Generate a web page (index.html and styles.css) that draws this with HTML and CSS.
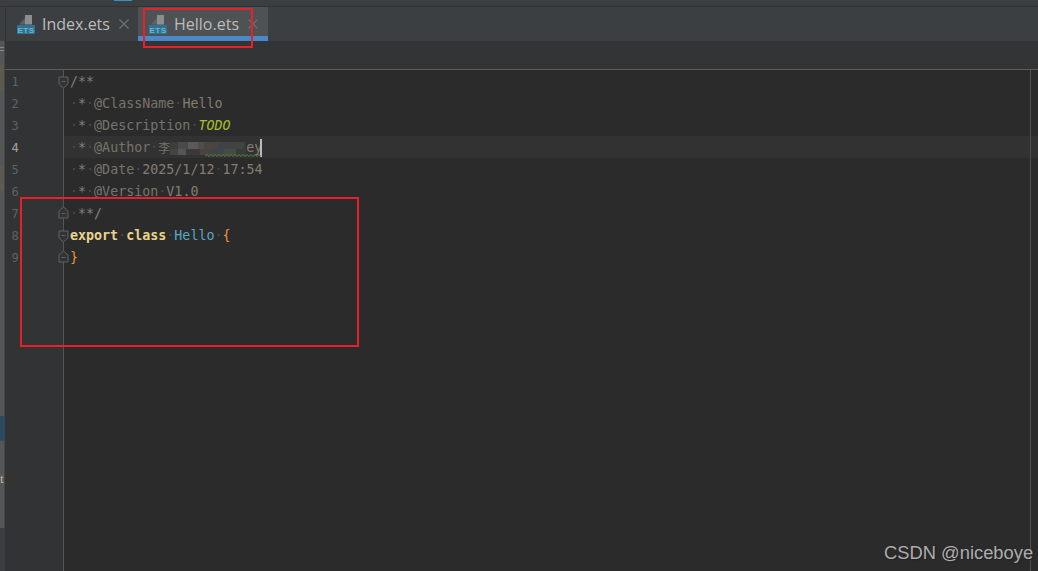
FILE: index.html
```html
<!DOCTYPE html>
<html lang="en">
<head>
<meta charset="utf-8">
<title>Hello.ets</title>
<link rel="stylesheet" href="styles.css">
</head>
<body>
<div class="app">
  <div class="topstrip"><span class="topmark"></span></div>
  <div class="tabbar">
    <div class="tab">
      <svg class="ets" viewBox="0 0 18 20" width="18" height="20"><rect class="ets-doc" x="8" y="0" width="7" height="9.500"/><path class="ets-fold" d="M2 9.500L8 3V9.500Z"/><rect class="ets-label" x="0" y="10" width="18" height="9"/><text class="ets-text" x="9" y="17.600" text-anchor="middle">ETS</text></svg>
      <span class="tab-name">Index.ets</span>
      <svg class="close" viewBox="0 0 10 10" width="10" height="10"><path d="M0.500 0.500L9.500 9.500M9.500 0.500L0.500 9.500"/></svg>
    </div>
    <div class="tab tab-active">
      <svg class="ets" viewBox="0 0 18 20" width="18" height="20"><rect class="ets-doc" x="8" y="0" width="7" height="9.500"/><path class="ets-fold" d="M2 9.500L8 3V9.500Z"/><rect class="ets-label" x="0" y="10" width="18" height="9"/><text class="ets-text" x="9" y="17.600" text-anchor="middle">ETS</text></svg>
      <span class="tab-name">Hello.ets</span>
      <svg class="close" viewBox="0 0 10 10" width="10" height="10"><path d="M0.500 0.500L9.500 9.500M9.500 0.500L0.500 9.500"/></svg>
    </div>
  </div>
  <div class="workspace">
    <div class="rail">
      <div class="rail-marks"></div>
      <div class="rail-tan"></div>
      <div class="rail-gap"></div>
      <div class="rail-tan"></div>
      <div class="rail-gap2"></div>
      <div class="rail-blue"></div>
      <div class="rail-gap3"></div>
      <div class="rail-letter">t</div>
      <div class="rail-fill"></div>
      <div class="rail-end"></div>
    </div>
    <div class="main">
      <div class="crumbs"></div>
      <div class="editor">
        <div class="gutter">
          <div class="gline"><span class="num">1</span><svg class="fold fold-down" viewBox="0 0 11 13" width="11" height="13"><path d="M1 1H10V8L5.500 12L1 8Z"/><path d="M3.500 5.500H7.500"/></svg></div>
          <div class="gline"><span class="num">2</span></div>
          <div class="gline"><span class="num">3</span></div>
          <div class="gline"><span class="num num-cur">4</span></div>
          <div class="gline"><span class="num">5</span></div>
          <div class="gline"><span class="num">6</span></div>
          <div class="gline"><span class="num">7</span><svg class="fold fold-up" viewBox="0 0 11 13" width="11" height="13"><path d="M1 12H10V5L5.500 1L1 5Z"/><path d="M3.500 7.500H7.500"/></svg></div>
          <div class="gline"><span class="num">8</span><svg class="fold fold-down" viewBox="0 0 11 13" width="11" height="13"><path d="M1 1H10V8L5.500 12L1 8Z"/><path d="M3.500 5.500H7.500"/></svg></div>
          <div class="gline"><span class="num">9</span><svg class="fold fold-up" viewBox="0 0 11 13" width="11" height="13"><path d="M1 12H10V5L5.500 1L1 5Z"/><path d="M3.500 7.500H7.500"/></svg></div>
        </div>
        <div class="code">
          <div class="line c-star">/**</div>
          <div class="line"><span class="ws">·</span><span class="c-star">*</span><span class="ws">·</span><span class="c-tag">@ClassName</span><span class="ws">·</span><span class="c-val">Hello</span></div>
          <div class="line"><span class="ws">·</span><span class="c-star">*</span><span class="ws">·</span><span class="c-tag">@Description</span><span class="ws">·</span><span class="c-todo">TODO</span></div>
          <div class="line line-cur"><span class="ws">·</span><span class="c-star">*</span><span class="ws">·</span><span class="c-tag">@Author</span><span class="ws">·</span><span class="c-cjk">李</span><span class="mosaic"></span><span class="c-val">ey</span><span class="caret"></span><svg class="squiggle" viewBox="0 0 56 3" width="56" height="3"><path d="M0 2.500L2 0.500L4 2.500L6 0.500L8 2.500L10 0.500L12 2.500L14 0.500L16 2.500L18 0.500L20 2.500L22 0.500L24 2.500L26 0.500L28 2.500L30 0.500L32 2.500L34 0.500L36 2.500L38 0.500L40 2.500L42 0.500L44 2.500L46 0.500L48 2.500L50 0.500L52 2.500L54 0.500L56 2.500"/></svg></div>
          <div class="line"><span class="ws">·</span><span class="c-star">*</span><span class="ws">·</span><span class="c-tag">@Date</span><span class="ws">·</span><span class="c-val">2025/1/12</span><span class="ws">·</span><span class="c-val">17:54</span></div>
          <div class="line"><span class="ws">·</span><span class="c-star">*</span><span class="ws">·</span><span class="c-tag">@Version</span><span class="ws">·</span><span class="c-val">V1.0</span></div>
          <div class="line"><span class="ws">·</span><span class="c-star">**/</span></div>
          <div class="line"><span class="kw">export</span><span class="ws">·</span><span class="kw">class</span><span class="ws">·</span><span class="cls">Hello</span><span class="ws">·</span><span class="brace">{</span></div>
          <div class="line"><span class="brace">}</span></div>
        </div>
      </div>
    </div>
  </div>
  <div class="mark mark-tab"></div>
  <div class="mark mark-code"></div>
  <div class="watermark">CSDN @niceboye</div>
</div>
</body>
</html>
```

FILE: styles.css
```css
* { box-sizing: border-box; }
html, body { margin: 0; height: 100%; background: #2b2b2b; }
.app {
  position: relative;
  width: 1038px;
  height: 571px;
  overflow: hidden;
  display: flex;
  flex-direction: column;
  font-family: "Open Sans", "Liberation Sans", sans-serif;
}
.topstrip {
  height: 7px;
  flex: none;
  background: #3c3f41;
  border-bottom: 1px solid #303133;
  padding-left: 114px;
}
.topmark { display: block; width: 18px; height: 1px; background: #3592c4; }
.tabbar {
  height: 34px;
  flex: none;
  display: flex;
  background: #3c3f41;
  padding-left: 5px;
}
.tab {
  width: 133px;
  padding: 0 0 0 11px;
  display: flex;
  align-items: center;
  border-left: 1px solid #323232;
}
.tab-active {
  width: 130px;
  padding-left: 11px;
  background: #4e5254;
  border-left: 0;
  box-shadow: inset 0 -5px 0 #4a88c7;
}
.ets { flex: none; margin-top: 2px; }
.ets-doc { fill: #8c8f91; }
.ets-fold { fill: #606366; }
.ets-label { fill: #2f7391; }
.ets-text {
  font-family: "Liberation Sans", sans-serif;
  font-size: 8px;
  font-weight: 700;
  letter-spacing: 0.5px;
  fill: #6db6d4;
}
.tab-name {
  margin-left: 7px;
  font-size: 16px;
  color: #bcbcbc;
  line-height: 22px;
}
.close { flex: none; margin-left: 9px; }
.close path { stroke: #6f7173; stroke-width: 1.2; fill: none; }
.workspace { flex: 1; min-height: 0; display: flex; }
.rail {
  width: 5px;
  flex: none;
  display: flex;
  flex-direction: column;
  background: #555658;
  border-right: 1px solid #444648;
}
.rail-marks {
  height: 25px;
  background: linear-gradient(#555658 6px, #8a8a8a 6px, #8a8a8a 7px, #555658 7px, #555658 9px, #8a8a8a 9px, #8a8a8a 10px, #555658 10px);
}
.rail-tan { height: 25px; background: #5d5b50; }
.rail-gap { height: 75px; }
.rail-gap2 { height: 225px; }
.rail-blue { height: 25px; width: 5px; background: #2d4a5f; }
.rail-gap3 { height: 32px; }
.rail-letter {
  height: 12px;
  width: 5px;
  overflow: hidden;
  font-family: "Liberation Serif", serif;
  font-size: 13px;
  line-height: 12px;
  color: #c8b79a;
}
.rail-fill { height: 43px; }
.rail-end { flex: 1; width: 5px; background: #3c3f41; }
.main { flex: 1; min-width: 0; display: flex; flex-direction: column; }
.crumbs {
  height: 29px;
  flex: none;
  background: #323436;
  border-bottom: 1px solid #5b5b5b;
}
.editor { flex: 1; min-height: 0; display: flex; }
.gutter {
  width: 59px;
  flex: none;
  background: #313335;
  border-right: 1px solid #555;
  position: relative;
  z-index: 1;
}
.gline { height: 22px; padding-top: 2px; display: flex; align-items: center; justify-content: space-between; }
.num {
  width: 20px;
  font-family: "DejaVu Sans Mono", monospace;
  font-size: 12px;
  text-align: center;
  color: #606366;
}
.num-cur { color: #a4a3a3; }
.fold { flex: none; margin-right: -6px; }
.fold-down { margin-top: 0; }
.fold-up { margin-bottom: 4px; }
.fold path { fill: #313335; stroke: #606366; stroke-width: 1; }
.code {
  flex: 1;
  min-width: 0;
  position: relative;
  background: #2b2b2b;
  font-family: "DejaVu Sans Mono", monospace;
  font-size: 13.330px;
}
.code::after {
  content: "";
  position: absolute;
  top: 0;
  bottom: 0;
  right: 7px;
  width: 1px;
  background: #4f4f4f;
}
.line {
  position: relative;
  height: 22px;
  line-height: 20px;
  padding: 2px 0 0 6px;
  display: flex;
  align-items: center;
  white-space: pre;
}
.line-cur { background: #323232; }
.ws { color: #4a4a4a; }
.c-star { color: #808080; }
.c-tag { color: #77736b; }
.c-val { color: #857d70; }
.c-todo { color: #a8c023; font-style: italic; }
.c-cjk {
  width: 12px;
  overflow: hidden;
  font-family: "Noto Sans CJK SC", sans-serif;
  font-size: 12px;
  color: #77736b;
}
.mosaic {
  width: 76px;
  height: 17px;
  background:
    linear-gradient(90deg, #3d3d3d 0 8px, #4a4a4a 8px 18px, #5a5a5a 18px 28px, #4e4e4e 28px 34px, #4a4542 34px 48px, #3f4347 48px 64px, #3f4640 64px 74px, #383838 74px) 0 2px / 100% 7px no-repeat,
    linear-gradient(90deg, #444 0 8px, #555 8px 16px, #3a3a3a 16px 30px, #4a4340 30px 40px, #404448 40px 54px, #444e46 54px 66px, #3a3a3a 66px) 0 9px / 100% 6px no-repeat;
}
.caret { width: 2px; height: 18px; margin-left: -2px; background: #bbbbbb; position: relative; }
.squiggle { position: absolute; left: 141px; top: 18px; }
.squiggle path { fill: none; stroke: #5c8a4a; stroke-width: 1; }
.kw { color: #e8d48b; font-weight: 700; }
.cls { color: #56a8c8; }
.brace { color: #e8933a; }
.mark { position: absolute; border: 2px solid #e8202a; z-index: 2; }
.mark-tab { left: 143px; top: 8px; width: 110px; height: 40px; }
.mark-code { left: 20px; top: 197px; width: 339px; height: 150px; }
.watermark {
  position: absolute;
  left: 884px;
  top: 541px;
  font-family: "Liberation Sans", sans-serif;
  font-size: 18.350px;
  line-height: 24px;
  color: #adadad;
  white-space: nowrap;
  z-index: 2;
  text-shadow: 1px 1px 1px #222;
}
```
